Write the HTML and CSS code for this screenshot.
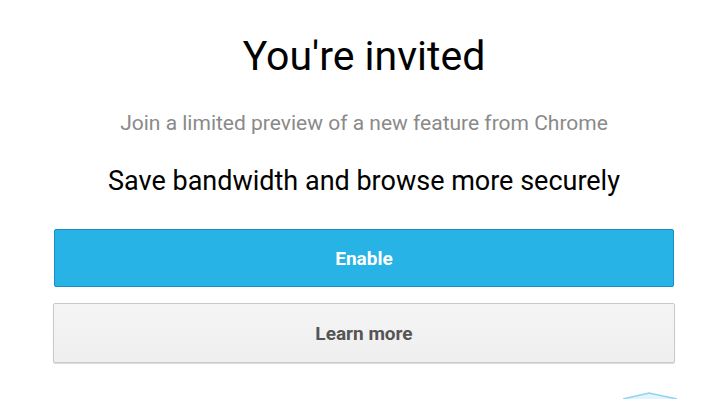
FILE: index.html
```html
<!DOCTYPE html>
<html>
<head>
<meta charset="utf-8">
<link rel="stylesheet" href="styles.css">
</head>
<body>
<main class="page">
  <h1 class="title">You're invited</h1>
  <p class="subtitle">Join a limited preview of a new feature from Chrome</p>
  <p class="lead">Save bandwidth and browse more securely</p>
  <div class="actions">
    <button class="btn btn-primary">Enable</button>
    <button class="btn btn-secondary">Learn more</button>
  </div>
  <div class="peek">
    <svg width="56" height="8" viewBox="0 0 56 8"><path d="M1 8 L27 2 L55 8 Z" fill="#e3f4fc"/><path d="M1 8 L27 2 L55 8" fill="none" stroke="#8fd3f3" stroke-width="1.5"/></svg>
  </div>
</main>
</body>
</html>
```
FILE: styles.css
```css
html, body {
  margin: 0;
  padding: 0;
  background: #ffffff;
}
.page {
  width: 728px;
  height: 400px;
  overflow: hidden;
  display: flex;
  flex-direction: column;
  align-items: center;
  font-family: Roboto, "Liberation Sans", sans-serif;
}
.title {
  margin: 32px 0 0;
  font-size: 41px;
  line-height: 48px;
  font-weight: 400;
  color: #000;
}
.subtitle {
  margin: 30px 0 0;
  font-size: 21px;
  line-height: 26px;
  color: #8a8a8a;
}
.lead {
  margin: 29px 0 0;
  font-size: 27px;
  line-height: 32px;
  color: #000;
}
.actions {
  margin-top: 32px;
  width: 622px;
  display: flex;
  flex-direction: column;
  align-items: center;
  gap: 16px;
}
.btn {
  font-family: Roboto, "Liberation Sans", sans-serif;
  font-weight: 700;
  font-size: 19px;
  border-radius: 2px;
  cursor: pointer;
}
.btn-primary {
  width: 620px;
  height: 58px;
  background: #27b3e6;
  border: 1px solid #1a8cc4;
  color: #fff;
}
.btn-secondary {
  width: 622px;
  height: 60px;
  background: linear-gradient(#f4f4f4, #efefef);
  border: 1px solid #c9c9c9;
  box-shadow: 0 1px 1px rgba(0,0,0,0.15);
  color: #555;
}
.peek {
  align-self: flex-end;
  margin: 28px 50px 0 0;
  line-height: 0;
}
```
